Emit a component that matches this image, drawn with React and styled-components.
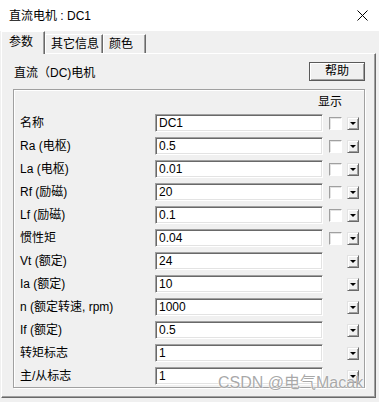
import React from "react";
import styled, { createGlobalStyle } from "styled-components";

const GlobalStyle = createGlobalStyle`
  html, body {
    margin: 0;
    padding: 0;
    background: #f0f0f0;
  }
  body {
    font-family: "Liberation Sans", "Noto Sans CJK SC", sans-serif;
    font-size: 12px;
    color: #000;
  }
`;

const rows = [
  { label: "名称", value: "DC1", show: true },
  { label: "Ra (电枢)", value: "0.5", show: true },
  { label: "La (电枢)", value: "0.01", show: true },
  { label: "Rf (励磁)", value: "20", show: true },
  { label: "Lf (励磁)", value: "0.1", show: true },
  { label: "惯性矩", value: "0.04", show: true },
  { label: "Vt (额定)", value: "24", show: false },
  { label: "Ia (额定)", value: "10", show: false },
  { label: "n (额定转速, rpm)", value: "1000", show: false },
  { label: "If (额定)", value: "0.5", show: false },
  { label: "转矩标志", value: "1", show: false },
  { label: "主/从标志", value: "1", show: false },
];

const tabs = [
  { name: "参数", width: 44, active: true },
  { name: "其它信息", width: 58, active: false },
  { name: "颜色", width: 43, active: false },
];

const App = () => {
  return (
    <Window>
      <GlobalStyle />
      <TitleBar>
        <span>直流电机 : DC1</span>
        <svg width="11" height="11" viewBox="0 0 11 11">
          <path d="M0.5 0.5 L10.5 10.5 M10.5 0.5 L0.5 10.5" stroke="#000" strokeWidth="1" />
        </svg>
      </TitleBar>

      <TabStrip>
        {tabs.map((t) => (
          <Tab key={t.name} $active={t.active} $width={t.width}>
            {t.name}
          </Tab>
        ))}
      </TabStrip>

      <TabPage>
        <TopRow>
          <span>直流（DC)电机</span>
          <Button>帮助</Button>
        </TopRow>

        <GroupBox>
          <HeaderRow>显示</HeaderRow>
          {rows.map((r) => (
            <Row key={r.label}>
              <Label>{r.label}</Label>
              <Field>{r.value}</Field>
              <CheckCell>{r.show && <CheckBox />}</CheckCell>
              <DropButton>
                <Arrow />
              </DropButton>
            </Row>
          ))}
        </GroupBox>
      </TabPage>

      <Watermark>CSDN @电气Macak</Watermark>
    </Window>
  );
};

const Window = styled.div`
  position: relative;
  width: 379px;
  height: 402px;
  background: #f0f0f0;
  display: flex;
  flex-direction: column;
  overflow: hidden;
`;

const TitleBar = styled.div`
  height: 31px;
  flex-shrink: 0;
  background: #fff;
  display: flex;
  align-items: center;
  justify-content: space-between;
  padding: 0 11px 0 9px;
  box-sizing: border-box;
  line-height: 16px;
`;

const TabStrip = styled.div`
  height: 22px;
  flex-shrink: 0;
  display: flex;
  align-items: flex-end;
  padding-left: 1px;
  position: relative;
  z-index: 1;
`;

const Tab = styled.div`
  width: ${(p) => p.$width}px;
  height: ${(p) => (p.$active ? 23 : 19)}px;
  margin-bottom: ${(p) => (p.$active ? -1 : 0)}px;
  box-sizing: border-box;
  background: #f0f0f0;
  border-top: 1px solid #fff;
  border-left: 1px solid #fff;
  border-right: 1px solid #696969;
  box-shadow: inset -1px 0 0 #a0a0a0;
  padding: ${(p) => (p.$active ? "3px 0 0 7px" : "2px 0 0 5px")};
  line-height: 15px;
  white-space: nowrap;
`;

const TabPage = styled.div`
  flex: 1;
  margin: 0 3px 4px 1px;
  border-top: 1px solid #fff;
  border-left: 1px solid #fff;
  border-right: 1px solid #696969;
  border-bottom: 1px solid #696969;
  box-shadow: inset -1px -1px 0 #a0a0a0;
  padding: 8px 10px 0 11px;
  display: flex;
  flex-direction: column;
`;

const TopRow = styled.div`
  display: flex;
  align-items: center;
  justify-content: space-between;
  height: 19px;
  padding-left: 1px;
`;

const Button = styled.div`
  width: 56px;
  height: 19px;
  box-sizing: border-box;
  border: 1px solid #5a5a5a;
  box-shadow: inset 1px 1px 0 #fff, inset -1px -1px 0 #a0a0a0;
  background: #f0f0f0;
  display: flex;
  align-items: center;
  justify-content: center;
  line-height: 15px;
`;

const GroupBox = styled.div`
  margin-top: 8px;
  border: 1px solid #a0a0a0;
  box-shadow: inset 1px 1px 0 #fff, 1px 1px 0 #fff;
  padding: 5px 5px 2px 6px;
  display: flex;
  flex-direction: column;
  gap: 5px;
`;

const HeaderRow = styled.div`
  height: 14px;
  line-height: 14px;
  text-align: right;
  padding-right: 17px;
`;

const Row = styled.div`
  display: flex;
  align-items: center;
  height: 18px;
`;

const Label = styled.div`
  width: 135px;
  flex-shrink: 0;
  white-space: nowrap;
  line-height: 16px;
`;

const Field = styled.div`
  width: 168px;
  height: 18px;
  box-sizing: border-box;
  background: #fff;
  border-top: 1px solid #a0a0a0;
  border-left: 1px solid #a0a0a0;
  border-right: 1px solid #fff;
  border-bottom: 1px solid #fff;
  box-shadow: inset 1px 1px 0 #696969, inset -1px -1px 0 #e3e3e3;
  padding: 1px 0 0 3px;
  line-height: 15px;
`;

const CheckCell = styled.div`
  width: 24px;
  display: flex;
  justify-content: center;
`;

const CheckBox = styled.div`
  width: 13px;
  height: 13px;
  box-sizing: border-box;
  background: #fff;
  border-top: 1px solid #a0a0a0;
  border-left: 1px solid #a0a0a0;
  border-right: 1px solid #fff;
  border-bottom: 1px solid #fff;
  box-shadow: inset 1px 1px 0 #e3e3e3;
`;

const DropButton = styled.div`
  width: 12px;
  height: 13px;
  box-sizing: border-box;
  background: #f0f0f0;
  border-top: 1px solid #e3e3e3;
  border-left: 1px solid #e3e3e3;
  border-right: 1px solid #696969;
  border-bottom: 1px solid #696969;
  box-shadow: inset 1px 1px 0 #fff, inset -1px -1px 0 #a0a0a0;
  display: flex;
  align-items: center;
  justify-content: center;
`;

const Arrow = styled.div`
  width: 0;
  height: 0;
  border-left: 3px solid transparent;
  border-right: 3px solid transparent;
  border-top: 3px solid #000;
  margin-top: 1px;
`;

const Watermark = styled.div`
  position: absolute;
  left: 218px;
  top: 374px;
  font-family: "Liberation Sans", "Noto Sans CJK SC", sans-serif;
  font-size: 16px;
  line-height: 18px;
  white-space: nowrap;
  color: rgba(140, 140, 140, 0.75);
  text-shadow: 0 0 1px #fff, 0 0 2px #fff;
  pointer-events: none;
`;

export default App;
